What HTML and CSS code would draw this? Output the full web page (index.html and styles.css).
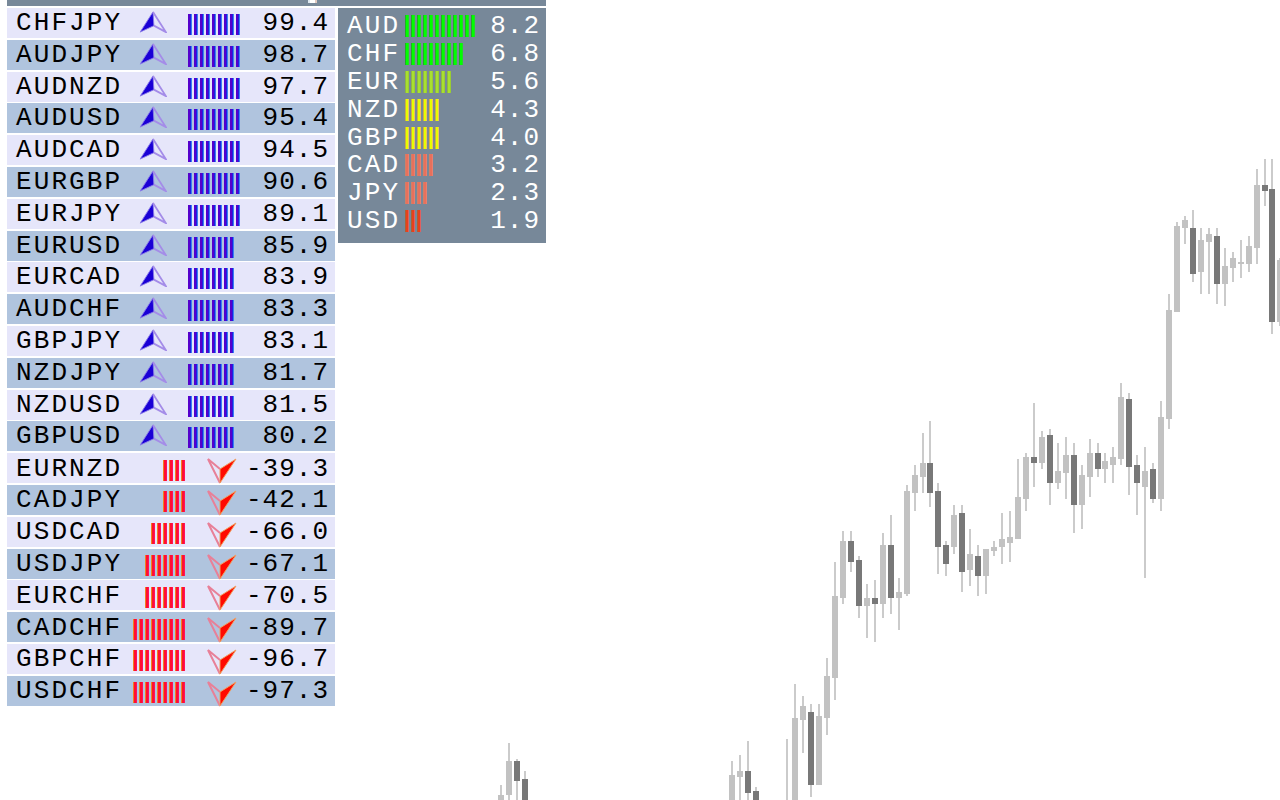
FILE: index.html
```html
<!DOCTYPE html>
<html lang="en">
<head>
<meta charset="UTF-8">
<title>Currency Strength Board</title>
<link rel="stylesheet" href="styles.css">
</head>
<body>
<svg class="chart" id="chart" width="1280" height="800" viewBox="0 0 1280 800"></svg>
<svg class="defs" width="0" height="0">
  <symbol id="arrowUp" viewBox="0 0 30 24">
    <path class="up-fill" d="M15 1 L1 23 L16 16 Z"/>
    <path class="up-line" d="M15 1 L29 23 L16 16"/>
  </symbol>
  <symbol id="arrowDown" viewBox="0 0 30 26">
    <path class="down-line" d="M13 25 L1 1 L13 11"/>
    <path class="down-fill" d="M13 25 L29 1 L13 11 Z"/>
  </symbol>
</svg>
<div class="board">
  <div class="topbar"></div>
  <div class="main">
    <div class="pairs">
      <div class="pair"><span class="name">CHFJPY</span><svg class="arrow up"><use href="#arrowUp"/></svg><div class="bar blue c9"></div><span class="val">99.4</span></div>
      <div class="pair"><span class="name">AUDJPY</span><svg class="arrow up"><use href="#arrowUp"/></svg><div class="bar blue c9"></div><span class="val">98.7</span></div>
      <div class="pair"><span class="name">AUDNZD</span><svg class="arrow up"><use href="#arrowUp"/></svg><div class="bar blue c9"></div><span class="val">97.7</span></div>
      <div class="pair"><span class="name">AUDUSD</span><svg class="arrow up"><use href="#arrowUp"/></svg><div class="bar blue c9"></div><span class="val">95.4</span></div>
      <div class="pair"><span class="name">AUDCAD</span><svg class="arrow up"><use href="#arrowUp"/></svg><div class="bar blue c9"></div><span class="val">94.5</span></div>
      <div class="pair"><span class="name">EURGBP</span><svg class="arrow up"><use href="#arrowUp"/></svg><div class="bar blue c9"></div><span class="val">90.6</span></div>
      <div class="pair"><span class="name">EURJPY</span><svg class="arrow up"><use href="#arrowUp"/></svg><div class="bar blue c9"></div><span class="val">89.1</span></div>
      <div class="pair"><span class="name">EURUSD</span><svg class="arrow up"><use href="#arrowUp"/></svg><div class="bar blue c8"></div><span class="val">85.9</span></div>
      <div class="pair"><span class="name">EURCAD</span><svg class="arrow up"><use href="#arrowUp"/></svg><div class="bar blue c8"></div><span class="val">83.9</span></div>
      <div class="pair"><span class="name">AUDCHF</span><svg class="arrow up"><use href="#arrowUp"/></svg><div class="bar blue c8"></div><span class="val">83.3</span></div>
      <div class="pair"><span class="name">GBPJPY</span><svg class="arrow up"><use href="#arrowUp"/></svg><div class="bar blue c8"></div><span class="val">83.1</span></div>
      <div class="pair"><span class="name">NZDJPY</span><svg class="arrow up"><use href="#arrowUp"/></svg><div class="bar blue c8"></div><span class="val">81.7</span></div>
      <div class="pair"><span class="name">NZDUSD</span><svg class="arrow up"><use href="#arrowUp"/></svg><div class="bar blue c8"></div><span class="val">81.5</span></div>
      <div class="pair"><span class="name">GBPUSD</span><svg class="arrow up"><use href="#arrowUp"/></svg><div class="bar blue c8"></div><span class="val">80.2</span></div>
      <div class="pair"><span class="name">EURNZD</span><div class="bar red c4"></div><svg class="arrow down"><use href="#arrowDown"/></svg><span class="val">-39.3</span></div>
      <div class="pair"><span class="name">CADJPY</span><div class="bar red c4"></div><svg class="arrow down"><use href="#arrowDown"/></svg><span class="val">-42.1</span></div>
      <div class="pair"><span class="name">USDCAD</span><div class="bar red c6"></div><svg class="arrow down"><use href="#arrowDown"/></svg><span class="val">-66.0</span></div>
      <div class="pair"><span class="name">USDJPY</span><div class="bar red c7"></div><svg class="arrow down"><use href="#arrowDown"/></svg><span class="val">-67.1</span></div>
      <div class="pair"><span class="name">EURCHF</span><div class="bar red c7"></div><svg class="arrow down"><use href="#arrowDown"/></svg><span class="val">-70.5</span></div>
      <div class="pair"><span class="name">CADCHF</span><div class="bar red c9"></div><svg class="arrow down"><use href="#arrowDown"/></svg><span class="val">-89.7</span></div>
      <div class="pair"><span class="name">GBPCHF</span><div class="bar red c9"></div><svg class="arrow down"><use href="#arrowDown"/></svg><span class="val">-96.7</span></div>
      <div class="pair"><span class="name">USDCHF</span><div class="bar red c9"></div><svg class="arrow down"><use href="#arrowDown"/></svg><span class="val">-97.3</span></div>
    </div>
    <div class="side">
      <div class="cur"><span class="name">AUD</span><div class="bar lime c12"></div><span class="val">8.2</span></div>
      <div class="cur"><span class="name">CHF</span><div class="bar lime c10"></div><span class="val">6.8</span></div>
      <div class="cur"><span class="name">EUR</span><div class="bar olive c8"></div><span class="val">5.6</span></div>
      <div class="cur"><span class="name">NZD</span><div class="bar yellow c6"></div><span class="val">4.3</span></div>
      <div class="cur"><span class="name">GBP</span><div class="bar yellow c6"></div><span class="val">4.0</span></div>
      <div class="cur"><span class="name">CAD</span><div class="bar salmon c5"></div><span class="val">3.2</span></div>
      <div class="cur"><span class="name">JPY</span><div class="bar salmon c4"></div><span class="val">2.3</span></div>
      <div class="cur"><span class="name">USD</span><div class="bar orange c3"></div><span class="val">1.9</span></div>
    </div>
  </div>
</div>
<script src="chart.js"></script>
</body>
</html>
```

FILE: styles.css
```css
:root {
  --row-a:#e6e6fa;
  --row-b:#b0c4de;
  --slate:#778899;
  --font-stack:"Liberation Mono",monospace;
}
*{box-sizing:border-box;}
body{margin:0;background:#fff;font-family:var(--font-stack);color:#000;height:800px;overflow:hidden;}
.defs{position:absolute;}
.chart{position:absolute;left:0;top:0;}
.chart .wick{fill:#cbcbcb;}
.chart .light{fill:#c2c2c2;}
.chart .dark{fill:#787878;}

.board{position:relative;width:539px;margin-left:7px;font-size:26px;letter-spacing:2.1px;}
.topbar{height:6px;background:var(--slate);position:relative;}
.topbar::after{content:"";position:absolute;left:301px;bottom:3px;width:9px;height:3px;background:linear-gradient(90deg,#dfe8f0 0 2px,#fff 2px 7px,#e0c8c0 7px);}
.main{display:flex;gap:3px;margin-top:2px;}

.pairs{width:328px;display:flex;flex-direction:column;gap:1.8px;}
.pair{height:30px;display:grid;grid-template-columns:116px 53px 3px 52px 1fr;align-items:center;padding:0 7px 3px 9px;background:var(--row-a);}
.pair:nth-child(even){background:var(--row-b);}
.pair .name{grid-column:1;}
.pair .val{grid-column:5;justify-self:end;letter-spacing:1px;margin-right:-1px;}
.pair .bar{height:21px;margin-top:3px;}
.pair .bar.blue{grid-column:4;justify-self:start;}
.pair .bar.red{grid-column:2;justify-self:end;}

.arrow.up{grid-column:2;width:28px;height:22px;margin:0 0 2px 7px;}
.arrow.down{grid-column:4;width:30px;height:26px;margin:5px 0 0 19px;}
.up-fill{fill:#1a00d6;stroke:#8a7be8;stroke-width:1;}
.up-line{fill:none;stroke:#a48ce8;stroke-width:2;}
.down-fill{fill:#ff0a00;stroke:#f0a060;stroke-width:1;}
.down-line{fill:none;stroke:#e88098;stroke-width:2;}

.side{width:208px;height:235px;background:var(--slate);color:#fff;padding:3px 7px 0 9px;}
.cur{height:27.9px;display:grid;grid-template-columns:58px auto 1fr;align-items:center;}
.cur .val{justify-self:end;letter-spacing:1px;margin-right:-1px;}
.cur .bar{height:22px;}

/* stripes repeat every 6px, the width sets how many show */
.blue{background:repeating-linear-gradient(90deg,#5500cc 0 2px,#2020e0 2px 3px,#3a80f0 3px 4px,transparent 4px 6px);}
.red{background:repeating-linear-gradient(90deg,#f08020 0 1px,#ff1030 1px 3px,#ff1060 3px 4px,transparent 4px 6px);}
.lime{background:repeating-linear-gradient(90deg,#20b020 0 1px,#00ff00 1px 3px,#20e020 3px 4px,transparent 4px 6px);}
.olive{background:repeating-linear-gradient(90deg,#90b840 0 1px,#a8e030 1px 3px,#9acd32 3px 4px,transparent 4px 6px);}
.yellow{background:repeating-linear-gradient(90deg,#d0b040 0 1px,#e6ff00 1px 3px,#f0c060 3px 4px,transparent 4px 6px);}
.salmon{background:repeating-linear-gradient(90deg,#d08068 0 1px,#e8705c 1px 3px,#e88070 3px 4px,transparent 4px 6px);}
.orange{background:repeating-linear-gradient(90deg,#b06030 0 1px,#e8401c 1px 3px,#e06060 3px 4px,transparent 4px 6px);}
.c3{width:16px;}
.c4{width:22px;}
.c5{width:28px;}
.c6{width:34px;}
.c7{width:40px;}
.c8{width:46px;}
.c9{width:52px;}
.c10{width:58px;}
.c12{width:70px;}
```

FILE: chart.js
```js
// x of body left, wick top, wick bottom, body top, body bottom, 1 = dark body
var candles = [
  [498,785,800,795,800,0],[506,743,800,761,795,0],[514,759,800,761,781,1],[522,771,800,779,800,1],
  [729,761,800,775,800,0],[737,755,800,771,777,0],[745,741,800,771,793,1],[753,787,800,791,800,1],
  [784,739,800,800,800,0],[792,684,800,718,800,0],[800,696,753,706,720,0],[808,704,797,712,785,1],
  [816,704,785,716,785,0],[824,658,735,676,718,0],[832,562,700,596,678,0],[840,531,604,541,598,0],
  [848,531,572,541,562,1],[856,556,618,560,606,1],[864,584,638,598,606,0],[872,580,642,598,604,1],
  [880,533,618,545,604,0],[888,515,614,545,598,1],[896,578,630,592,598,0],[904,485,596,491,594,0],
  [912,465,511,475,493,0],[920,433,493,463,477,0],[927,421,507,463,493,1],[935,483,574,491,547,1],
  [943,541,576,545,564,1],[951,505,554,515,547,0],[959,505,592,513,572,1],[967,529,586,554,570,0],
  [975,545,596,556,576,1],[983,549,594,549,576,0],[991,541,556,547,551,0],[999,513,564,539,547,0],
  [1007,511,562,537,543,0],[1015,459,539,497,539,0],[1023,453,511,457,499,0],[1031,403,487,457,463,1],
  [1039,431,469,437,463,0],[1047,429,505,435,483,1],[1055,443,489,471,483,0],[1063,437,499,455,473,0],
  [1071,443,533,455,505,1],[1079,465,529,475,505,0],[1087,439,497,453,477,0],[1095,443,477,453,469,1],
  [1102,453,483,461,469,0],[1110,447,483,457,465,0],[1118,383,465,397,459,0],[1126,393,495,399,467,1],
  [1134,455,515,465,483,1],[1142,447,578,471,487,0],[1150,463,503,469,499,1],[1158,401,511,417,499,0],
  [1166,294,429,310,419,0],[1174,222,312,226,312,0],[1182,216,244,220,228,0],[1190,210,282,228,274,1],
  [1198,228,294,240,272,0],[1206,228,294,234,242,0],[1214,228,304,236,284,1],[1222,248,306,266,284,0],
  [1230,252,282,258,268,0],[1238,240,278,262,264,0],[1246,236,272,246,264,0],[1254,169,264,185,248,0],
  [1262,159,206,185,191,1],[1269,159,334,189,322,1],[1277,258,326,260,322,0]
];
var chart = document.getElementById('chart');
function addRect(cls, x, y, w, h) {
  var r = document.createElementNS('http://www.w3.org/2000/svg', 'rect');
  r.setAttribute('class', cls);
  r.setAttribute('x', x);
  r.setAttribute('y', y);
  r.setAttribute('width', w);
  r.setAttribute('height', h);
  chart.appendChild(r);
}
candles.forEach(function (c) {
  addRect('wick', c[0] + 2, c[1], 2, c[2] - c[1]);
  addRect(c[5] ? 'dark' : 'light', c[0], c[3], 6, c[4] - c[3]);
});
```
